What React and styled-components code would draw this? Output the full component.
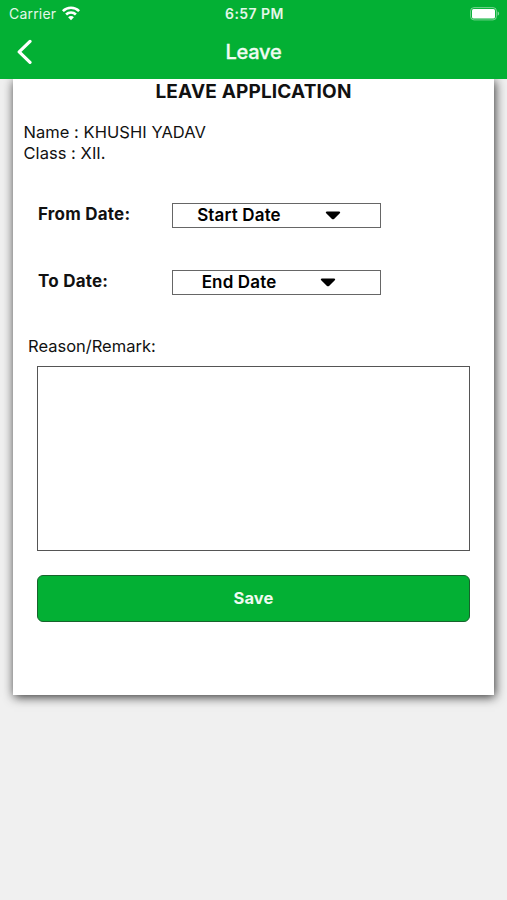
import React from 'react'
import styled, { createGlobalStyle } from 'styled-components';


const DateField = ({ label, value, top }) => {
    return (
        <DateRow $top={top}>
            <DateLabel>{label}</DateLabel>
            <DateButton type="button">
                {value}
                <svg width="16" height="9" viewBox="0 0 16 9">
                    <path d="M2 0.5H14C15.2 0.5 15.5 1.5 14.8 2.2L9 7.9C8.4 8.5 7.6 8.5 7 7.9L1.2 2.2C0.5 1.5 0.8 0.5 2 0.5Z" fill="#000" />
                </svg>
            </DateButton>
        </DateRow>
    )
}

const App = () => {
    return (
        <>
            <GlobalStyle />
            <Screen>
                <Header>
                    <StatusBar>
                        <Carrier>
                            Carrier
                            <svg width="20" height="15" viewBox="0 0 20 15">
                                <path d="M1.9 5.1C6.4 0.6 13.6 0.6 18.1 5.1" fill="none" stroke="#fff" strokeWidth="2.6" />
                                <path d="M5.1 8.5C7.8 5.8 12.2 5.8 14.9 8.5" fill="none" stroke="#fff" strokeWidth="2.6" />
                                <path d="M10 14.2L7.1 11.2C8.7 9.6 11.3 9.6 12.9 11.2Z" fill="#fff" />
                            </svg>
                        </Carrier>
                        <Clock>6:57 PM</Clock>
                        <Battery>
                            <svg width="30" height="14" viewBox="0 0 30 14">
                                <rect x="0.6" y="0.6" width="25.8" height="12.3" rx="3.4" fill="none" stroke="#fff" strokeOpacity="0.45" />
                                <rect x="2" y="2" width="23" height="9.5" rx="1.6" fill="#fff" />
                                <path d="M27.6 4.6C29.6 5.2 29.6 8.2 27.6 8.8Z" fill="#fff" fillOpacity="0.5" />
                            </svg>
                        </Battery>
                    </StatusBar>
                    <NavBar>
                        <BackButton type="button" aria-label="Back">
                            <svg width="16" height="26" viewBox="0 0 16 26">
                                <path d="M14 2.4L3.2 12.9L14 23.4" fill="none" stroke="#fff" strokeWidth="3.2" strokeLinecap="round" strokeLinejoin="round" />
                            </svg>
                        </BackButton>
                        <NavTitle>Leave</NavTitle>
                    </NavBar>
                </Header>
                <Card>
                    <CardTitle>LEAVE APPLICATION</CardTitle>
                    <Student>
                        <StudentLine>Name : KHUSHI YADAV</StudentLine>
                        <StudentLine>Class : XII.</StudentLine>
                    </Student>
                    <DateField label="From Date:" value="Start Date" top="39px" />
                    <DateField label="To Date:" value="End Date" top="42px" />
                    <RemarkLabel htmlFor="remark">Reason/Remark:</RemarkLabel>
                    <Remark id="remark" />
                    <SaveButton type="button">Save</SaveButton>
                </Card>
            </Screen>
        </>
    )
}

export default App


const GlobalStyle = createGlobalStyle`
* {
    box-sizing: border-box;
}
body {
    margin: 0;
    background: #f0f0f0;
    font-family: Inter, "Liberation Sans", sans-serif;
    color: #111;
}
button, textarea {
    font-family: inherit;
}
`;

const Screen = styled.div`
width: 100%;
height: 900px;
overflow: hidden;
background: #f0f0f0;
`;

const Header = styled.header`
position: relative;
z-index: 1;
height: 79px;
background: #03b034;
color: #fff;
`;

const StatusBar = styled.div`
display: grid;
grid-template-columns: 1fr auto 1fr;
align-items: center;
height: 27px;
padding: 0 7px 0 9px;
`;

const Carrier = styled.div`
display: flex;
align-items: center;
gap: 5px;
font-size: 14px;
letter-spacing: 0.2px;
color: #e4f7e9;
`;

const Clock = styled.div`
font-size: 14px;
font-weight: 600;
letter-spacing: 0.45px;
color: #e4f7e9;
`;

const Battery = styled.div`
display: flex;
justify-content: flex-end;
`;

const NavBar = styled.div`
display: grid;
grid-template-columns: 1fr auto 1fr;
align-items: center;
height: 50px;
padding: 0 16px;
`;

const BackButton = styled.button`
display: flex;
width: 16px;
padding: 0;
border: none;
background: none;
`;

const NavTitle = styled.h1`
margin: 0;
font-size: 20px;
font-weight: 500;
line-height: 24px;
letter-spacing: -0.2px;
color: #f0fbf2;
-webkit-text-stroke: 0.3px #f0fbf2;
`;

const Card = styled.main`
display: flex;
flex-direction: column;
height: 616px;
margin: 0 13px;
background: #fff;
box-shadow: 1px 2px 10px rgba(0, 0, 0, 0.8);
`;

const CardTitle = styled.h2`
margin: 0;
padding-top: 1px;
font-size: 19px;
font-weight: 700;
line-height: 24px;
letter-spacing: 0.17px;
text-align: center;
`;

const Student = styled.div`
margin: 18px 0 0 10.5px;
`;

const StudentLine = styled.p`
margin: 0;
font-size: 16.5px;
line-height: 21px;
letter-spacing: 0.04px;
`;

const DateRow = styled.div`
display: flex;
align-items: center;
height: 25px;
margin-top: ${props => props.$top};
padding-left: 25px;
`;

const DateLabel = styled.div`
width: 134px;
padding-bottom: 4px;
font-size: 17px;
font-weight: 700;
letter-spacing: 0.22px;
`;

const DateButton = styled.button`
display: flex;
align-items: center;
justify-content: center;
gap: 44px;
width: 209px;
height: 25px;
padding: 0 15px 2px 0;
border: 1px solid #666;
background: #fff;
color: #000;
font-size: 17px;
font-weight: 600;
letter-spacing: 0.15px;

svg {
    margin-top: 2px;
}
`;

const RemarkLabel = styled.label`
margin: 41px 0 0 15px;
font-size: 16.5px;
line-height: 21px;
`;

const Remark = styled.textarea`
height: 185px;
margin: 9px 24px 0;
padding: 8px;
border: 1px solid #555;
background: #fff;
resize: none;
outline: none;
`;

const SaveButton = styled.button`
height: 47px;
margin: 24px 24px 0;
padding: 0 0 1px;
border: 1px solid #17632c;
border-radius: 6px;
background: #03b034;
color: #f0fbf2;
font-size: 16.5px;
font-weight: 700;
letter-spacing: 0.1px;
`;
